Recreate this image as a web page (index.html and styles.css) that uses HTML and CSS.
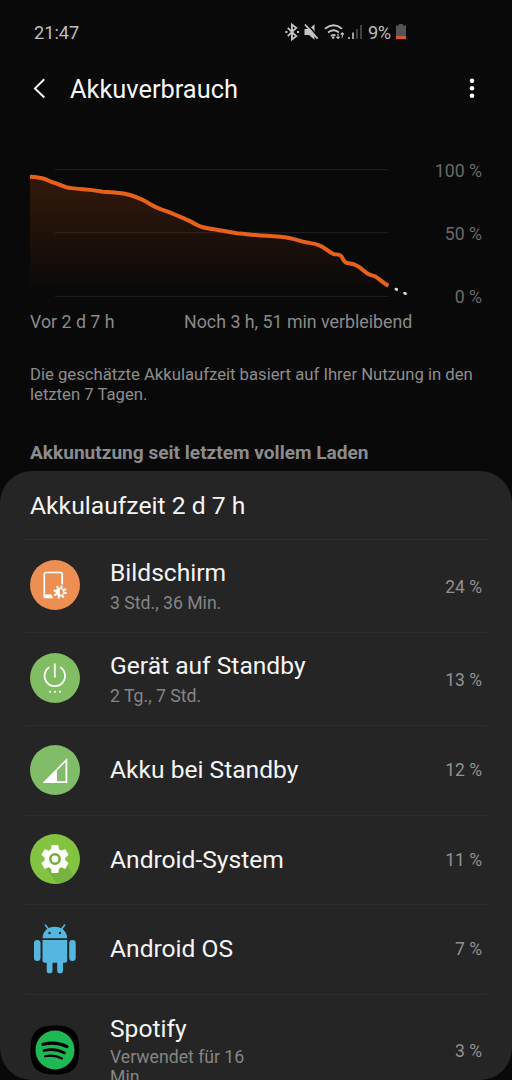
FILE: index.html
```html
<!DOCTYPE html>
<html lang="de">
<head>
<meta charset="utf-8">
<title>Akkuverbrauch</title>
<link rel="stylesheet" href="styles.css">
</head>
<body>
<div class="screen">
  <div class="status">
    <span class="clock">21:47</span>
    <div class="status-icons">
      <svg width="79" height="20" viewBox="284 22 79 20" fill="none" stroke="#c4c4c4">
        <path d="M287.8 27.8l8.4 8.4-4.2 3.2V24.6l4.2 3.2-8.4 8.4" stroke-width="1.9"/>
        <path d="M285.4 32h2M297 32h2" stroke-width="2"/>
        <path d="M304.5 29h4.5l5.5-4.7v15.4L309 35h-4.5z" fill="#c4c4c4" stroke="none"/>
        <path d="M306.8 23.2l13 16" stroke="#090909" stroke-width="1.8"/>
        <path d="M305 24.5l12.6 14.2" stroke-width="1.8"/>
        <path d="M325 28.7q8.5-7 17 0M328 32.5q5.7-4.6 11 0M331 36q2.6-2 4.5-.3" stroke-width="1.8"/>
        <circle cx="333.2" cy="37.5" r="1.3" fill="#c4c4c4" stroke="none"/>
        <path d="M338 33.7v4.6M336.4 36.8l1.6 1.7 1.6-1.7M342.3 37.4v-4.6M340.7 34.5l1.6-1.7 1.6 1.7" stroke-width="1.1"/>
        <path d="M349 37v2M353 32.5V39" stroke-width="1.6"/>
        <path d="M357 29v10M361 25v14" stroke="#4b4b4b" stroke-width="1.7"/>
      </svg>
      <span class="level">9%</span>
      <svg width="12" height="16" viewBox="0 0 12 16">
        <path d="M3.8 0h4v1.5H11V12H1V1.5h2.8z" fill="#555"/>
        <path d="M1 12h10v3.2H1z" fill="#d4573a"/>
      </svg>
    </div>
  </div>

  <header class="bar">
    <svg class="back" width="14" height="22" viewBox="0 0 14 22"><path d="M12.3 1.3L3 10.4l9.3 9.1" fill="none" stroke="#f5f5f5" stroke-width="2"/></svg>
    <h1 class="title">Akkuverbrauch</h1>
    <svg class="more" width="8" height="24" viewBox="0 0 8 24" fill="#fff"><circle cx="4" cy="3.7" r="2.3"/><circle cx="4" cy="11.3" r="2.3"/><circle cx="4" cy="18.7" r="2.3"/></svg>
  </header>

  <section class="chart">
    <svg width="382" height="140" viewBox="30 160 382 140">
      <defs><linearGradient id="fade" x1="0" y1="176" x2="0" y2="294" gradientUnits="userSpaceOnUse"><stop offset="0" stop-color="#ea5b12" stop-opacity=".19"/><stop offset="1" stop-color="#ea5b12" stop-opacity="0"/></linearGradient></defs>
      <path d="M55 169.7H388M55 232.7H388M55 296.3H388" stroke="#1c1c1c" stroke-width="1.2"/>
      <path fill="url(#fade)" d="M30 176.7L43 178.7L68 187.5L93 190L130 195L143 200L157 207.7L188 220.3L202 227L237 233.3L269 236L289 238L319 245L333 253.7L340 255L345 262L356 265L369 274L375 276L388 285.7V296H30z"/>
      <path fill="none" stroke="#e8611a" stroke-width="4" stroke-linejoin="round" d="M30 176.7C36 177 40 177.5 43.3 178.5C47 179.5 50 181.7 54 182.7C60 184.4 63 187 68.3 187.7C74 188.4 78 189 83 189.3C91 189.8 97 190.7 103 191.7C109 192.3 113 192.3 117 192.7C122 193 126 193.8 130 195C135 196.5 139 198 143 200C148 202.6 152 205.6 157 207.7C162 209.8 166 211 172 213.3C178 215.7 183 218 188.3 220.3C193 222.3 196 225.4 202 227C207 228.4 212 229 217 229.7C224 231 230 232.3 237 233.3C243 234 250 234.5 256 235C267 236 279 236.3 289 238C295 239 300 241 306 242.3C311 243.2 315 243.5 319.3 245.3C325 247.5 328 251.8 333.3 253.8C336 254.7 338 254 340.5 255.5C343 257.3 342.5 260.5 345.5 262.3C349 263.8 352 263.4 356 265.3C362 268 364 272 369.3 274.5C371 275.4 373 275.4 375.3 276.5C380 279 383 283.3 388.5 285.7"/>
      <path d="M395.9 289.1l.8.4M404.6 293.2l.8.4" stroke="#d9dddd" stroke-width="2.8" stroke-linecap="round"/>
    </svg>
    <div class="scale"><span>100 %</span><span>50 %</span><span>0 %</span></div>
  </section>
  <div class="axis"><span>Vor 2 d 7 h</span><span class="remain">Noch 3 h, 51 min verbleibend</span></div>
  <p class="note">Die geschätzte Akkulaufzeit basiert auf Ihrer Nutzung in den letzten 7 Tagen.</p>
  <h2 class="section">Akkunutzung seit letztem vollem Laden</h2>

  <main class="panel">
    <div class="runtime">Akkulaufzeit 2 d 7 h</div>
    <div class="row tall">
      <svg class="icon" viewBox="0 0 50 50"><circle cx="25" cy="25" r="25" fill="#ed8f52"/>
        <path d="M32.2 24.5V14a1.5 1.5 0 0 0-1.5-1.5H15.8a1.5 1.5 0 0 0-1.5 1.5v21.5" fill="none" stroke="#fff" stroke-width="1.7"/>
        <path d="M13.5 34.5h8l1.8 3.7h-8.5a1.3 1.3 0 0 1-1.3-1.3z" fill="#fff"/>
        <circle cx="30" cy="32" r="5.4" fill="none" stroke="#fff" stroke-width="2.5" stroke-dasharray="2 2.24"/>
        <circle cx="30" cy="32" r="3.7" fill="none" stroke="#fff" stroke-width="1.5"/><path d="M30 28.3a3.7 3.7 0 0 0 0 7.4z" fill="#fff"/></svg>
      <div class="text"><div class="name">Bildschirm</div><div class="sub">3 Std., 36 Min.</div></div><span class="pct">24 %</span>
    </div>
    <div class="row tall">
      <svg class="icon" viewBox="0 0 50 50"><circle cx="25" cy="25" r="25" fill="#81bd63"/>
        <path d="M19.3 14.3a10.2 10.2 0 1 0 11 0M24.8 10.5v14" fill="none" stroke="#fff" stroke-width="1.8"/>
        <g fill="#fff"><circle cx="20" cy="38.7" r="1"/><circle cx="25" cy="38.7" r="1"/><circle cx="30" cy="38.7" r="1"/></g></svg>
      <div class="text"><div class="name">Gerät auf Standby</div><div class="sub">2 Tg., 7 Std.</div></div><span class="pct">13 %</span>
    </div>
    <div class="row">
      <svg class="icon" viewBox="0 0 50 50"><circle cx="25" cy="25" r="25" fill="#81bd68"/><path fill="#fff" fill-rule="evenodd" d="M12.5 38L37.3 13v25zM27 25.5v10.7h8.5V17z"/></svg>
      <div class="text"><div class="name">Akku bei Standby</div></div><span class="pct">12 %</span>
    </div>
    <div class="row">
      <svg class="icon" viewBox="0 0 50 50"><circle cx="25" cy="25" r="25" fill="#82c441"/><path d="M16 34L27 49.9Q37 49 43 42L37 30z" fill="#76b33f"/>
        <g transform="translate(8.4 8.2) scale(1.38 1.4)"><path fill="#fff" d="M19.43 12.98c.04-.32.07-.64.07-.98s-.03-.66-.07-.98l2.11-1.65c.19-.15.24-.42.12-.64l-2-3.46c-.12-.22-.39-.3-.61-.22l-2.49 1c-.52-.4-1.08-.73-1.69-.98l-.38-2.65C14.46 2.18 14.25 2 14 2h-4c-.25 0-.46.18-.49.42l-.38 2.65c-.61.25-1.17.59-1.69.98l-2.49-1c-.23-.09-.49 0-.61.22l-2 3.46c-.13.22-.07.49.12.64l2.11 1.65c-.04.32-.07.65-.07.98s.03.66.07.98l-2.11 1.65c-.19.15-.24.42-.12.64l2 3.46c.12.22.39.3.61.22l2.49-1c.52.4 1.08.73 1.69.98l.38 2.65c.03.24.24.42.49.42h4c.25 0 .46-.18.49-.42l.38-2.65c.61-.25 1.17-.59 1.69-.98l2.49 1c.23.09.49 0 .61-.22l2-3.46c.12-.22.07-.49-.12-.64z"/><circle cx="12" cy="12" r="3.4" fill="#fff" stroke="#6fae39" stroke-width="1.8"/></g></svg>
      <div class="text"><div class="name">Android-System</div></div><span class="pct">11 %</span>
    </div>
    <div class="row">
      <svg class="icon" viewBox="0 0 50 50" fill="#55b7df"><path d="M12.5 14.3C12.8 7 18 2.8 24.8 2.8S36.8 7 37.2 14.3z"/><path d="M18.5 5L15.3 1.1M31.5 5L34.7 1.1" stroke="#55b7df" stroke-width="1.6" stroke-linecap="round"/><circle cx="19.5" cy="9" r="1.2" fill="#252525"/><circle cx="30" cy="9" r="1.2" fill="#252525"/><path d="M12.5 16h24.7v20.5a2.3 2.3 0 0 1-2.3 2.3H33V46.4a2.9 2.9 0 0 1-5.8 0v-7.6h-4.7v7.6a2.9 2.9 0 0 1-5.8 0v-7.6h-1.9a2.3 2.3 0 0 1-2.3-2.3z"/><rect x="4" y="16" width="6.5" height="21" rx="3.2"/><rect x="39.2" y="16" width="6.5" height="21" rx="3.2"/></svg>
      <div class="text"><div class="name">Android OS</div></div><span class="pct">7 %</span>
    </div>
    <div class="row last">
      <svg class="icon" viewBox="0 0 50 50"><path d="M25 .5C43 .5 49.2 7 49.2 25S43 49.5 25 49.5.5 43 .5 25 7 .5 25 .5z" fill="#000"/><circle cx="25" cy="25" r="19.5" fill="#1eb954"/><g fill="none" stroke="#000" stroke-linecap="round"><path d="M13 19.3q13-3.2 24 2.3" stroke-width="3.2"/><path d="M14 25.6q11-2.7 20.6 2.4" stroke-width="2.6"/><path d="M15 31.3q9.5-2 17 2.2" stroke-width="2.1"/></g></svg>
      <div class="text"><div class="name">Spotify</div><div class="sub">Verwendet für 16 Min.</div></div><span class="pct">3 %</span>
    </div>
  </main>
</div>
</body>
</html>
```
FILE: styles.css
```css
* { box-sizing: border-box; }
body { margin: 0; background: #090909; font-family: Roboto, "Noto Sans", sans-serif; }
h1, h2, p { margin: 0; }
svg { display: block; flex: none; }
.screen { width: 512px; height: 1080px; overflow: hidden; display: flex; flex-direction: column; background: #090909; color: #999; }
.status { height: 64px; flex: none; padding: 0 105px 0 34px; display: flex; align-items: center; justify-content: space-between; color: #bebebe; font-size: 18.2px; }
.status-icons { display: flex; align-items: center; }
.level { margin: 0 3px 0 5px; width: 24px; white-space: nowrap; letter-spacing: -.5px; }
.bar { height: 50px; flex: none; padding: 0 36px 0 32px; display: flex; align-items: center; }
.title { margin-left: 24px; flex: 1; font-size: 25.4px; font-weight: 400; color: #f7f7f7; }
.chart { margin-top: 46px; height: 140px; flex: none; padding: 0 30px; display: flex; justify-content: space-between; }
.scale { height: 147px; padding-top: 1px; display: flex; flex-direction: column; justify-content: space-between; text-align: right; font-size: 17.7px; line-height: 20px; color: #6b6b6b; }
.axis { height: 24px; margin-top: 10px; flex: none; padding-left: 30px; display: flex; font-size: 17.8px; line-height: 24px; color: #8a8a8a; }
.remain { margin-left: 69.5px; }
.note { margin-top: 31px; height: 40px; flex: none; padding: 0 30px; font-size: 16.68px; line-height: 20px; color: #8d8d8d; }
.section { margin-top: 36px; height: 30px; flex: none; padding-left: 30px; font-size: 19.08px; line-height: 23px; font-weight: 700; color: #8c8c8c; }
.panel { height: 609px; flex: none; overflow: hidden; border-radius: 32px; background: #252525; }
.runtime { height: 68px; padding-left: 30px; font-size: 24.7px; line-height: 70px; color: #f5f5f5; }
.row { height: 89.5px; margin: 0 25px; padding: 0 5px; border-top: 1px solid #2e2e2e; display: flex; align-items: center; }
.row.tall { height: 93px; }
.icon { width: 50px; height: 50px; margin-bottom: 1px; }
.tall .icon { margin-bottom: 2px; }
.text { width: 220px; margin-left: 30px; }
.name { font-size: 24.6px; line-height: 30px; color: #f5f5f5; }
.tall .name { line-height: 30px; }
.tall .sub { margin-top: 3px; }
.sub { font-size: 17.65px; line-height: 24px; color: #858585; }
.pct { margin-left: auto; font-size: 17.5px; color: #929292; }
.tall .pct { padding-top: 1px; }
.last { height: 113px; }
.last .text { width: 150px; padding-top: 1px; }
.last .name { line-height: 28px; }
.last .sub { margin-top: 4px; line-height: 20px; }
```
